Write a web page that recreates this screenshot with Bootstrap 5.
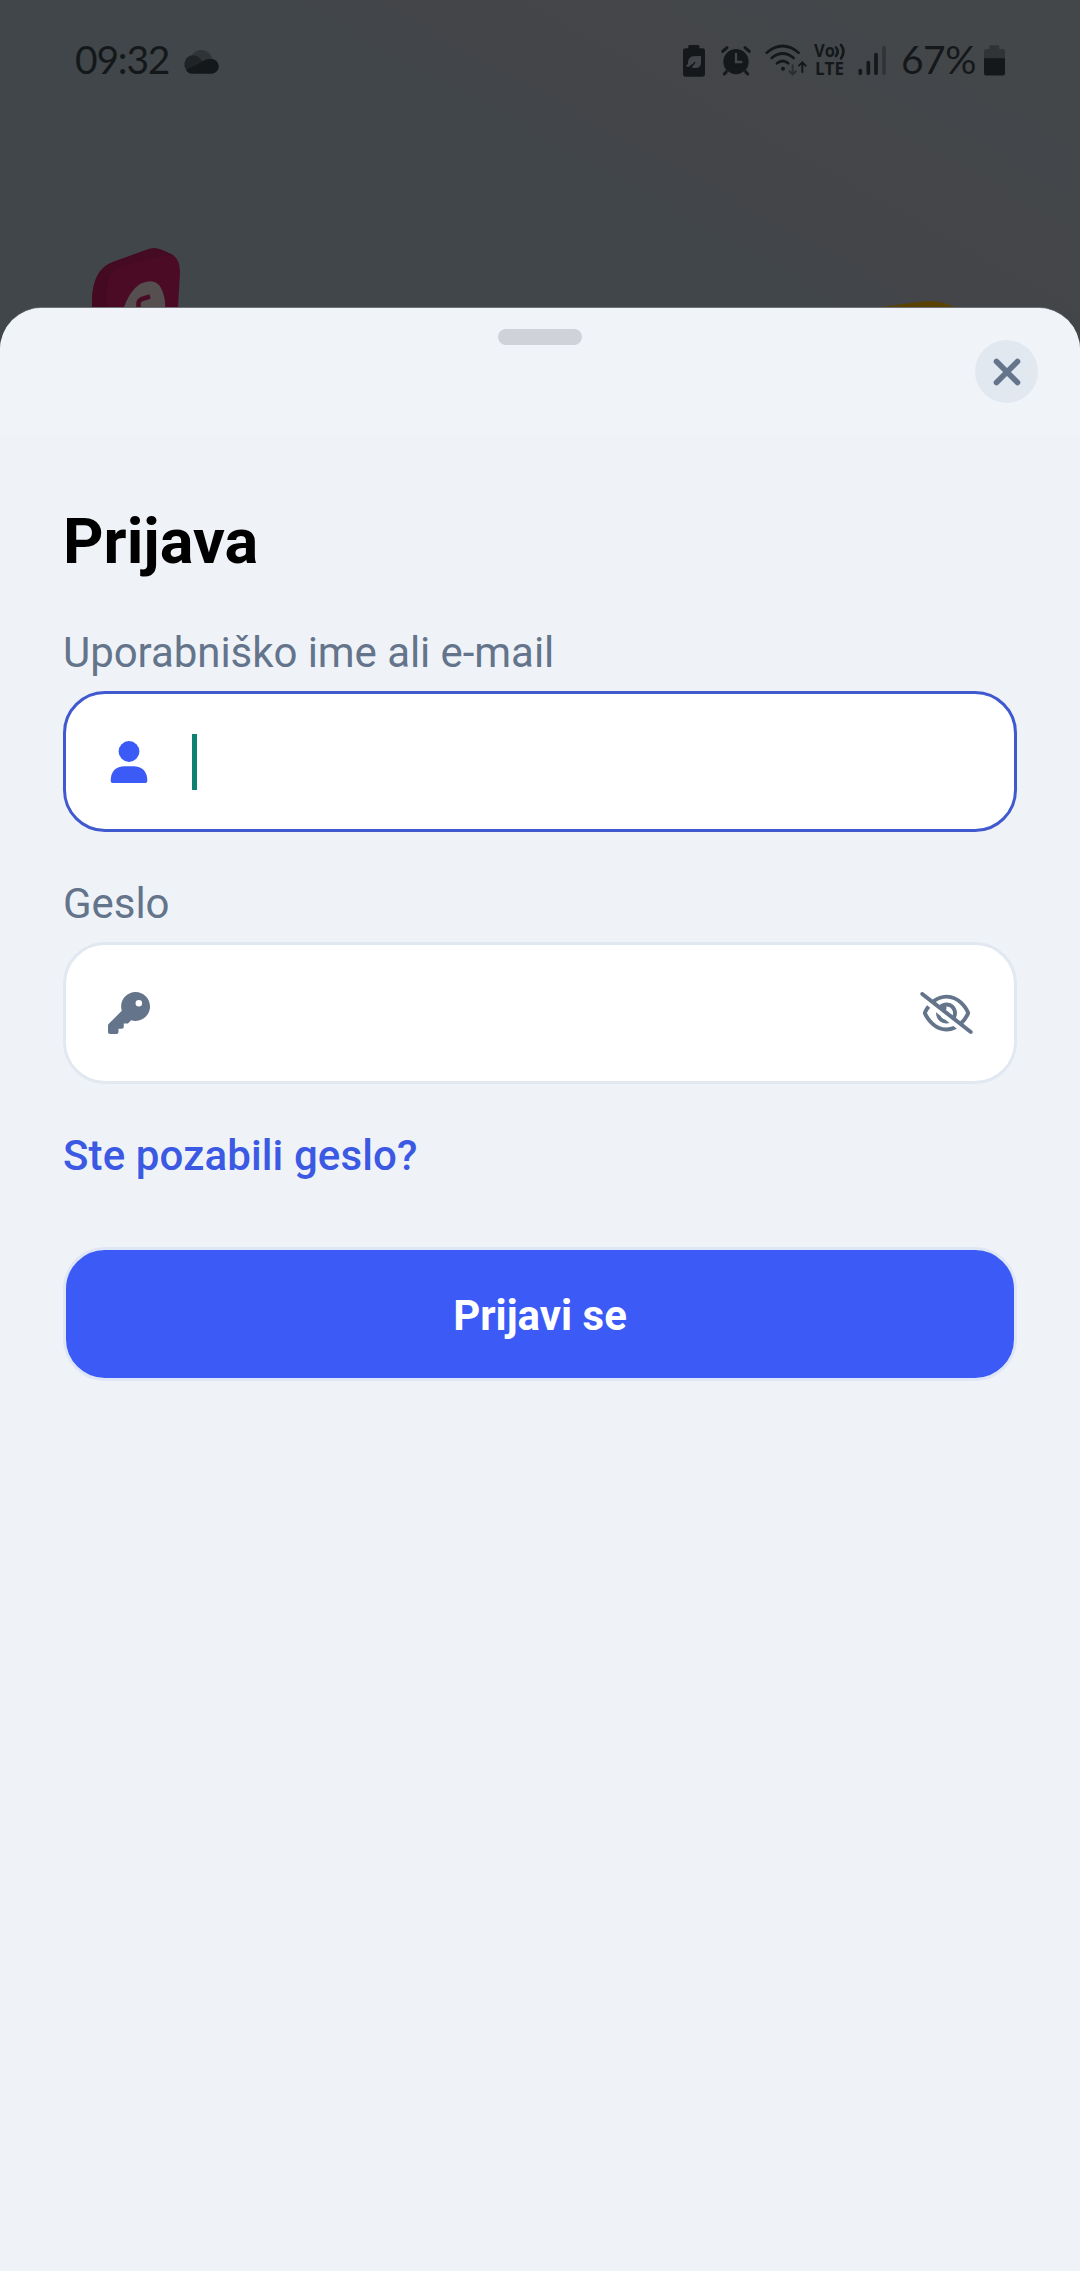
<!DOCTYPE html>
<html lang="sl">
<head>
<meta charset="utf-8">
<meta name="viewport" content="width=device-width, initial-scale=1">
<title>Prijava</title>
<link href="https://cdn.jsdelivr.net/npm/bootstrap@5.3.0/dist/css/bootstrap.min.css" rel="stylesheet">
<style>
  body { font-family: Roboto, "Noto Sans", sans-serif; background: #eff3f8; color: #000; }
  svg { display: block; flex: none; overflow: visible; }
  .screen { width: 1080px; height: 2271px; background: #42464a; }
  .backdrop { height: 360px; background: linear-gradient(209deg, #43474a 0%, #43474a 12%, #444549 34%, #434549 40%, #404649 50%, #404649 100%); }
  .backdrop-art { top: 0; left: 0; }
  .statusbar { height: 120px; padding: 0 75px 0 75px; color: #15181a; font-family: Lato, sans-serif; }
  .clock { font-size: 39px; line-height: 46px; letter-spacing: -1.2px; width: 108px; margin-top: 36px; }
  .percent { font-size: 39px; line-height: 46px; letter-spacing: -.5px; width: 83px; margin-top: 36px; }
  .volte { width: 44px; margin: 43px 0 0 6px; }
  .sheet { height: 1963px; margin-top: -52px; border-radius: 42px 42px 0 0; background: #eff3f8; box-shadow: 0 -1px 0 #6f7378; }
  .sheet-head { height: 126px; background: #f0f4f9; padding: 21px 42px 0; border-radius: 42px 42px 0 0; }
  .grip { width: 84px; height: 16px; background: #cfd2d9; }
  .side { width: 63px; }
  .btn-round { width: 63px; height: 63px; background: #e1e8f0; color: #64748b; margin-top: 11px; }
  .form-area { padding: 76px 63px 0; }
  .title { font-size: 63px; line-height: 64px; font-weight: 700; margin-bottom: 55px; }
  .field-label { font-size: 42px; line-height: 48px; letter-spacing: -.06px; color: #64748b; margin-bottom: 14px; }
  .field { height: 142px; border: 3px solid #e2e8f0; border-radius: 42px; background: #fff; padding: 0 41px 0 42px; color: #64748b; }
  .field.active { border-color: #4159cf; color: #3b5af6; height: 141px; }
  .caret { width: 5px; height: 56px; background: #0e8272; margin-left: 42px; }
  .field-gap { margin-top: 48px; }
  .forgot { font-size: 42px; line-height: 48px; letter-spacing: .12px; font-weight: 500; color: #3c59e3; margin-top: 48px; }
  .btn-submit { height: 134px; border: 3px solid #dfe6f5; border-radius: 42px; background: #3b5af6; color: #fff; font-size: 42px; font-weight: 700; margin-top: 67px; line-height: 1; padding: 4px 0 0; }
</style>
<script src="https://cdn.jsdelivr.net/npm/bootstrap@5.3.0/dist/js/bootstrap.bundle.min.js"></script>
</head>
<body class="m-0">
<main class="screen overflow-hidden">
  <section class="backdrop position-relative">
    <svg class="backdrop-art position-absolute" width="1080" height="360" viewBox="0 0 1080 360">
      <path d="M92 325V300Q93 269 113 262L149 249Q156 247 162 250L173 255Q180 260 180 272L177 325Z" fill="#4c0b25"/>
      <path d="M92 325V300Q93 269 113 262Q107 275 107 295V325Z" fill="#430a20"/>
      <path d="M113 262L149 249Q156 247 162 250L173 255Q150 256 119 268Q110 272 108 281Q107 270 113 262Z" fill="#450b23"/>
      <path d="M123 310Q129 291 140 284Q155 277 161 288Q166 298 165 310Z" fill="#55504f"/>
      <path d="M138.500 310V303Q139 300 142 299L150 296.500" fill="none" stroke="#480c25" stroke-width="4.500"/>
      <path d="M866 309L922 301.500Q941 299 958 309Z" fill="#594304"/>
    </svg>
    <div class="statusbar position-relative d-flex align-items-start">
      <div class="clock">09:32</div>
      <svg width="37" height="24" viewBox="550 148 110 72" style="margin-top:49.500px">
        <path d="M574 168A33 33 0 0 1 637 176L600 192Z" fill="#303437"/>
        <path d="M560 208A27 27 0 0 1 578 164Q597 164 607 182L560 208Z" fill="#1f2326"/>
        <path d="M607 183Q617 174 634 175L560 208Z" fill="#1f2326"/>
        <path d="M558 207L606 183Q617 174 634 175A22 22 0 0 1 636 219H577Q565 219 558 207Z" fill="#15181a"/>
      </svg>
      <svg class="ms-auto" width="22" height="32" viewBox="66 74 66 96" style="margin-top:44.500px">
        <path d="M85 74h27q3 0 3 4v6h9q8 0 8 8v70q0 7-8 7H74q-8 0-8-7V92q0-8 8-8h8v-6q0-4 3-4Z" fill="#15181a"/>
        <path d="M120 107v20q0 16-17 16-8 0-12-2l11-15-20 14q-7 0-7-5l6-3q-2-20 14-24Z" fill="#42464a"/>
        <path d="M77 145Q91 144 102 125" fill="none" stroke="#15181a" stroke-width="4"/>
      </svg>
      <svg width="30" height="31" viewBox="182 75 90 93" style="margin:45px 0 0 16.500px" stroke="#15181a" stroke-linecap="round">
        <circle cx="227" cy="125" r="38" fill="#15181a" stroke="none"/>
        <path d="M187 94L200 83M254 83L267 94M198 155L192 162M256 155L262 162" stroke-width="9"/>
        <path d="M227 102V126H243" fill="none" stroke="#42464a" stroke-width="7"/>
      </svg>
      <svg width="43" height="32" viewBox="312 73 129 96" style="margin:44px 0 0 13.500px" fill="none" stroke="#15181a" stroke-width="8" stroke-linecap="round">
        <path d="M317 99Q365 59 413 99M332 115Q365 88 398 115M348 131Q365 117 382 131"/>
        <circle cx="366" cy="147" r="6" fill="#15181a" stroke="none"/>
        <path d="M395 137V164M385 155L395 164L405 155" stroke="#2a2e31" stroke-width="6"/>
        <path d="M424 157V129M414 138L424 128L434 138" stroke-width="6"/>
      </svg>
      <svg class="volte" width="44" height="34" viewBox="0 0 44 34">
        <g fill="#15181a" font-family="Open Sans, sans-serif" font-weight="700" font-size="17.500"><text x="0" y="14" textLength="21" lengthAdjust="spacingAndGlyphs">Vo</text><text x="1" y="32" textLength="29" lengthAdjust="spacingAndGlyphs">LTE</text></g>
        <path d="M22 4.500q3.500 4 0 8.500M27 2q5 6 0 13.500" fill="none" stroke="#15181a" stroke-width="2.600" stroke-linecap="round"/>
      </svg>
      <svg width="29" height="31" viewBox="596 75 87 93" style="margin-top:45px" stroke="#15181a" stroke-width="11" stroke-linecap="round">
        <path d="M603 152V160M627 128V160M650 104V160"/><path d="M674 83V160" stroke="#303437"/>
      </svg>
      <div class="percent text-nowrap" style="margin-left:14.500px">67%</div>
      <svg width="21" height="31" viewBox="972 75 63 93" style="margin-top:45px">
        <path d="M991 76h24q3 0 3 4v7h10q7 0 7 7v66q0 7-7 7H979q-7 0-7-7V94q0-7 7-7h9v-7q0-4 3-4Z" fill="#303437"/>
        <path d="M972 115H1035V158q0 8-7 8H979q-7 0-7-8Z" fill="#15181a"/>
      </svg>
    </div>
  </section>

  <section class="sheet position-relative">
    <header class="sheet-head d-flex justify-content-between align-items-start">
      <span class="side"></span>
      <span class="grip rounded-pill"></span>
      <button class="btn btn-round rounded-circle p-0 border-0 d-flex align-items-center justify-content-center" type="button" aria-label="Zapri">
        <svg width="28" height="28" viewBox="0 0 28 28" stroke="currentColor" stroke-width="5.600" stroke-linecap="round"><path d="M3.500 3.500L24.500 24.500M24.500 3.500L3.500 24.500"/></svg>
      </button>
    </header>
    <form class="form-area d-flex flex-column">
      <h1 class="title mt-0">Prijava</h1>
      <div class="field-label">Uporabniško ime ali e-mail</div>
      <div class="field active d-flex align-items-center">
        <svg width="42" height="42" viewBox="0 0 42 42" fill="currentColor"><circle cx="21" cy="10.500" r="10.400"/><path d="M2.700 40Q2.700 25.500 17 25.200H25Q39.300 25.500 39.300 40Q39.300 42 37.300 42H4.700Q2.700 42 2.700 40Z"/></svg>
        <span class="caret"></span>
      </div>
      <div class="field-label field-gap">Geslo</div>
      <div class="field d-flex align-items-center justify-content-between">
        <svg width="42" height="42" viewBox="0 0 512 512" fill="currentColor"><path d="M336 352c97.200 0 176-78.800 176-176S433.200 0 336 0S160 78.800 160 176c0 18.700 2.900 36.800 8.300 53.700L7 391c-4.500 4.500-7 10.600-7 17v80c0 13.300 10.700 24 24 24h80c13.300 0 24-10.700 24-24V448h40c13.300 0 24-10.700 24-24V384h40c6.400 0 12.500-2.500 17-7l33.300-33.300c16.900 5.400 35 8.300 53.700 8.300zM376 96a40 40 0 1 1 0 80 40 40 0 1 1 0-80z"/></svg>
        <svg width="53" height="42" viewBox="0 0 640 512" fill="currentColor"><path d="M38.800 5.100C28.400-3.100 13.300-1.200 5.100 9.200S-1.200 34.700 9.200 42.900l592 464c10.400 8.200 25.500 6.300 33.700-4.100s6.300-25.500-4.100-33.700L525.600 386.700c39.600-40.600 66.400-86.100 79.900-118.400c3.300-7.900 3.300-16.700 0-24.600c-14.900-35.700-46.200-87.700-93-131.100C465.500 68.800 400.800 32 320 32c-68.200 0-125 26.300-169.300 60.800L38.800 5.100zm151 118.300C226 97.700 269.500 80 320 80c65.200 0 118.800 29.600 159.900 67.700C518.400 183.500 545 226 558.600 256c-12.600 28-36.600 66.800-70.900 100.900l-53.800-42.200c9.100-17.600 14.200-37.500 14.200-58.700c0-70.700-57.300-128-128-128c-32.200 0-61.700 11.900-84.200 31.500l-46.100-36.100zM394.900 284.200l-81.500-63.900c4.200-8.500 6.600-18.200 6.600-28.300c0-5.500-.7-10.900-2-16c.7 0 1.300 0 2 0c44.200 0 80 35.800 80 80c0 9.900-1.800 19.400-5.100 28.200zm9.400 130.300C378.800 425.400 350.700 432 320 432c-65.200 0-118.800-29.600-159.900-67.700C121.600 328.500 95 286 81.400 256c8.300-18.400 21.500-41.500 39.400-64.800L83.100 161.500C60.300 191.200 44 220.800 34.500 243.700c-3.300 7.900-3.300 16.700 0 24.600c14.900 35.700 46.200 87.700 93 131.100C174.500 443.200 239.200 480 320 480c47.800 0 89.900-12.900 126.200-32.500l-41.900-33zM192 256c0 70.700 57.300 128 128 128c13.300 0 26.100-2 38.200-5.800L302 334c-23.500-5.400-43.100-21.200-53.700-42.300l-56.100-44.200c-.2 2.800-.3 5.600-.3 8.500z"/></svg>
      </div>
      <a class="forgot text-decoration-none align-self-start" href="#">Ste pozabili geslo?</a>
      <button class="btn btn-submit w-100" type="button">Prijavi se</button>
    </form>
  </section>
</main>
</body>
</html>
